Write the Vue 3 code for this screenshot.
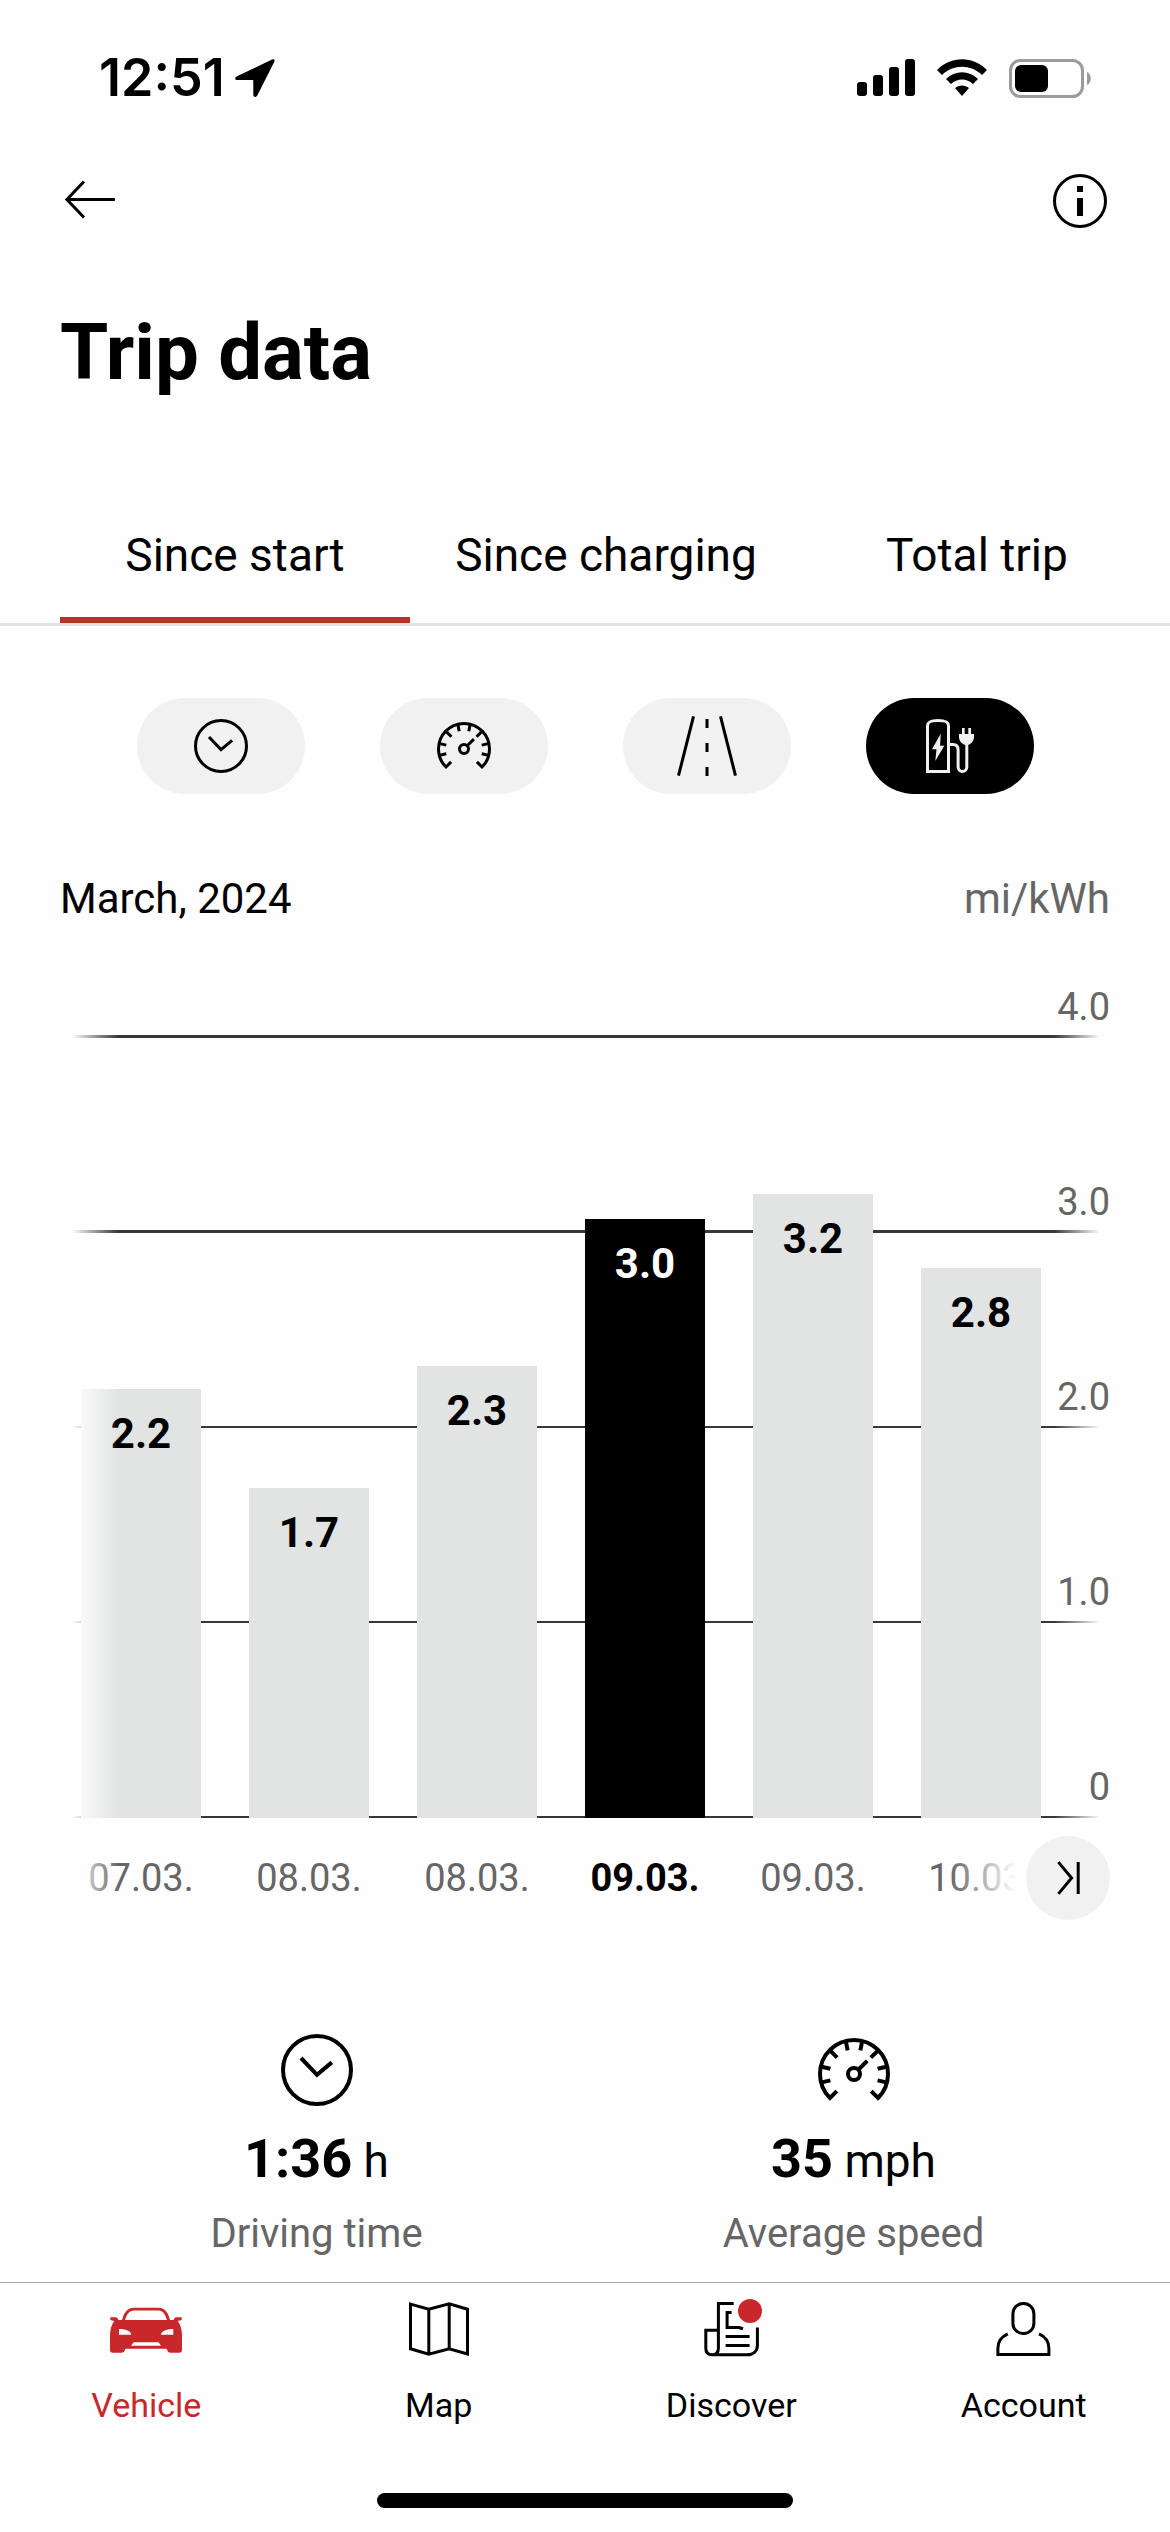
<template>
  <div class="app">
    <!-- shared icon shapes, 24 x 24 grid -->
    <svg class="sprite" aria-hidden="true">
      <symbol id="clock" viewBox="0 0 24 24">
        <circle cx="12" cy="12" r="8.5" />
        <path d="M8 9L12 13.2L15.7 10.1" />
      </symbol>
      <symbol id="gauge" viewBox="0 0 24 24">
        <path d="M7.7 17.3L6 19A8.5 8.5 0 1 1 18 19L16.3 17.3" />
        <path d="M3.9 11.2L6.1 11.7M3.9 15.1L6.1 14.6M6.1 7.2L7.8 8.9M10 5L10.4 7.1M20.1 11.2L17.9 11.7M20.1 15.1L17.9 14.6M17.9 7.2L16.2 8.9M14 5L13.6 7.1" />
        <circle cx="12" cy="13" r="1.5" />
        <path d="M13 12L15.3 9.7" />
      </symbol>
      <symbol id="road" viewBox="0 0 24 24">
        <path d="M7.5 2.1L2.5 21.9M16.5 2.1L21.5 21.9M12 3V6M12 11V14M12 19V22" />
      </symbol>
      <symbol id="charge" viewBox="0 0 24 24">
        <path d="M4.5 20.5V5.3C4.5 4 5.4 3.5 8 3.5S11.5 4 11.5 5.3V20.5Z" />
        <path d="M11.8 11.5H13C14.2 11.5 14.7 12.2 14.7 13.3V19A1.45 1.5 0 0 0 17.6 19V11" />
        <path class="solid" d="M8.9 7.9L6 13.1H7.5L7.1 17L10.1 11.9H8.7ZM16 6H16.9V8H18.1V6H19V8H20V9C20 10.4 19 11.3 18.1 11.6H17C16 11.3 15 10.4 15 9V8H16Z" />
      </symbol>
      <symbol id="car" viewBox="0 0 24 24">
        <path
          class="solid"
          fill-rule="evenodd"
          d="M4 9C4.6 6.6 5.8 4.9 7.8 4.9H16.3C18.3 4.9 19.4 6.6 20 9L21.2 9C21.3 8.4 21.7 8.1 22.2 8.1H23.9V9L22.6 9.3C23.5 10.5 24 12.4 24 14V19C24 19.6 23.7 19.9 23.1 19.9H20.2C19.5 19.9 19.1 19.5 18.9 18.6H5.1C4.9 19.5 4.5 19.9 3.8 19.9H.9C.3 19.9 0 19.6 0 19V14C0 12.4.5 10.5 1.4 9.3L.1 9V8.1H1.8C2.3 8.1 2.7 8.4 2.8 9ZM5 9H19C18.4 7 17.6 5.8 16.2 5.8H7.9C6.5 5.8 5.6 7 5 9ZM3 12V13.9H7.1C7 12.9 5.6 12 3 12ZM21.1 12V13.9H17C17.1 12.9 18.5 12 21.1 12ZM7.9 16.4L7 17.6H17L16.2 16.4Z"
        />
      </symbol>
      <symbol id="map" viewBox="0 0 24 24">
        <path d="M2.5 3.7L8.6 5.4L15.4 3.6L21.5 5.4V20.3L15.4 18.6L8.6 20.4L2.5 18.6ZM8.6 5.4V20.4M15.4 3.6V18.6" />
      </symbol>
      <symbol id="news" viewBox="0 0 24 24">
        <path d="M12.9 3.5H7.8V18.4C7.8 19.8 7 20.6 5.7 20.6S3.6 19.8 3.6 18.4V12.4H7.8M5.7 20.6H17.4C19.5 20.6 20.8 19.3 20.8 17.4V11.5" />
        <path d="M12.2 6.5H10.7V11.5H14.6L16 11.9M10.2 14.5H18.2M10.2 17.5H18.2" />
      </symbol>
      <symbol id="account" viewBox="0 0 24 24">
        <rect x="8.3" y="3.5" width="7" height="10" rx="3.4" />
        <path d="M6.6 13.6C4.6 14.5 3.3 16.2 3.3 18.4V20.5H20.3V18.4C20.3 16.2 19 14.5 17 13.6" />
      </symbol>
    </svg>

    <div class="status">
      <div class="clock">
        <span>12:51</span>
        <svg class="location" viewBox="0 0 40 38">
          <path d="M37 .6L2 17.2C-.7 18.6-.1 21 2.500 21H17.500C18 21 18.300 21.300 18.300 21.800V35.500C18.300 38.400 21.200 38.900 22.400 36.300L39.200 3C40.200.9 39-.3 37 .6Z" />
        </svg>
      </div>
      <div class="system">
        <svg class="signal" viewBox="0 0 58 38">
          <rect x="0" y="23" width="10" height="14" rx="3" />
          <rect x="16" y="16" width="10" height="21" rx="3" />
          <rect x="32" y="8" width="10" height="29" rx="3" />
          <rect x="48" y="0" width="10" height="37" rx="3" />
        </svg>
        <svg class="wifi" viewBox="0 0 50 38">
          <path d="M0 11C14-3.500 36-3.500 50 11L45 16C34 5 16 5 5 16Z" />
          <path d="M9 20C18 11 32 11 41 20L36 25C30 19 20 19 14 25Z" />
          <path d="M18 29C22 25.500 28 25.500 32 29L25 37Z" />
        </svg>
        <svg class="battery" viewBox="0 0 83 39">
          <rect class="shell" x="1.500" y="1.500" width="72" height="36" rx="10" />
          <rect x="6" y="6" width="33" height="27" rx="6" />
          <path class="nub" d="M78 13C83 15 83 24 78 26Z" />
        </svg>
      </div>
    </div>

    <header class="header">
      <button class="icon-button" aria-label="Back">
        <svg class="icon" viewBox="0 0 24 24"><path d="M10 5.500L4.300 11.500L10 17.500M4.300 11.500H20.300" /></svg>
      </button>
      <button class="icon-button" aria-label="Information">
        <svg class="icon" viewBox="0 0 24 24">
          <circle cx="12" cy="12" r="8.500" />
          <path class="solid" d="M11 7H13V9H11ZM11 11H13V17H11Z" />
        </svg>
      </button>
    </header>

    <h1 class="title">Trip data</h1>

    <div class="tabs" role="tablist">
      <button
        v-for="tab in tabs"
        :key="tab"
        class="tab"
        :class="{ active: tab === activeTab }"
        role="tab"
        :aria-selected="tab === activeTab"
        @click="activeTab = tab"
      >
        {{ tab }}
      </button>
    </div>

    <div class="metrics">
      <button
        v-for="metric in metrics"
        :key="metric.icon"
        class="metric"
        :class="{ active: metric.icon === activeMetric }"
        :aria-label="metric.name"
        @click="activeMetric = metric.icon"
      >
        <svg class="icon"><use :href="'#' + metric.icon" /></svg>
      </button>
    </div>

    <section class="chart">
      <div class="chart-head">
        <span>March, 2024</span>
        <span class="muted">mi/kWh</span>
      </div>
      <div class="plot">
        <div class="scale">
          <div v-for="step in steps" :key="step" class="step">{{ step }}</div>
        </div>
        <div class="bars">
          <button
            v-for="(trip, i) in trips"
            :key="i"
            class="bar"
            :class="{ active: i === activeTrip }"
            :style="{ height: (trip.value / 4) * 100 + '%' }"
            @click="activeTrip = i"
          >
            {{ trip.label }}
          </button>
        </div>
      </div>
      <div class="dates">
        <span v-for="(trip, i) in trips" :key="i" class="date" :class="{ active: i === activeTrip }">{{ trip.date }}</span>
        <button class="latest" aria-label="Latest trip" @click="activeTrip = trips.length - 1">
          <svg class="icon" viewBox="0 0 24 24"><path d="M8.800 6.700L13.200 12L8.800 17.300M15.400 6.700V17.300" /></svg>
        </button>
      </div>
    </section>

    <section class="stats">
      <div v-for="stat in stats" :key="stat.name" class="stat">
        <svg class="icon large"><use :href="'#' + stat.icon" /></svg>
        <div class="stat-value"><b>{{ stat.value }}</b> {{ stat.unit }}</div>
        <div class="stat-name muted">{{ stat.name }}</div>
      </div>
    </section>

    <nav class="nav">
      <a v-for="item in navItems" :key="item.name" href="#" class="nav-item" :class="{ active: item.name === 'Vehicle' }">
        <span class="nav-icon">
          <svg class="icon"><use :href="'#' + item.icon" /></svg>
          <i v-if="item.badge" class="badge"></i>
        </span>
        {{ item.name }}
      </a>
    </nav>
    <div class="home-indicator"></div>
  </div>
</template>

<script setup>
import { ref } from "vue";

const tabs = ["Since start", "Since charging", "Total trip"];
const activeTab = ref("Since start");

const metrics = [
  { icon: "clock", name: "Driving time" },
  { icon: "gauge", name: "Average speed" },
  { icon: "road", name: "Distance" },
  { icon: "charge", name: "Consumption" },
];
const activeMetric = ref("charge");

const steps = ["4.0", "3.0", "2.0", "1.0", "0"];
const trips = [
  { date: "07.03.", value: 2.2, label: "2.2" },
  { date: "08.03.", value: 1.69, label: "1.7" },
  { date: "08.03.", value: 2.32, label: "2.3" },
  { date: "09.03.", value: 3.07, label: "3.0" },
  { date: "09.03.", value: 3.2, label: "3.2" },
  { date: "10.03.", value: 2.82, label: "2.8" },
];
const activeTrip = ref(3);

const stats = [
  { icon: "clock", value: "1:36", unit: "h", name: "Driving time" },
  { icon: "gauge", value: "35", unit: "mph", name: "Average speed" },
];

const navItems = [
  { icon: "car", name: "Vehicle" },
  { icon: "map", name: "Map" },
  { icon: "news", name: "Discover", badge: true },
  { icon: "account", name: "Account" },
];
</script>

<style>
body {
  background: #fefefe;
}
</style>

<style scoped>
.app {
  --page: #fefefe;
  --red: #c8282a;
  display: flex;
  flex-direction: column;
  min-height: 100vh;
  background: var(--page);
  color: #000;
  font-family: Roboto, "Liberation Sans", sans-serif;
}

button {
  padding: 0;
  border: none;
  background: none;
  color: inherit;
  font: inherit;
}

.sprite {
  display: none;
}

.icon {
  display: block;
  width: 72px;
  height: 72px;
  fill: none;
  stroke: currentColor;
  stroke-width: 1;
}

.icon.large {
  width: 96px;
  height: 96px;
}

.solid {
  fill: currentColor;
  stroke: none;
}

.muted {
  color: #666;
}

.status {
  display: flex;
  justify-content: space-between;
  align-items: center;
  height: 60px;
  padding: 48px 78px 57px 99px;
}

.clock {
  display: flex;
  align-items: center;
  gap: 10px;
  font: 600 52px/60px Inter, sans-serif;
}

.location {
  width: 40px;
  height: 38px;
}

.system {
  display: flex;
  align-items: center;
  gap: 22px;
}

.signal {
  width: 58px;
  height: 38px;
}

.wifi {
  width: 50px;
  height: 38px;
}

.battery {
  width: 83px;
  height: 39px;
}

.shell {
  fill: none;
  stroke: #9b9b9b;
  stroke-width: 3;
}

.nub {
  fill: #9b9b9b;
}

.header {
  display: flex;
  justify-content: space-between;
  padding: 0 54px;
}

.title {
  margin: 66px 60px 0;
  font-size: 78px;
  line-height: 100px;
  font-weight: 700;
}

.tabs {
  display: grid;
  grid-template-columns: repeat(3, 1fr);
  gap: 21px;
  padding: 122px 18px 0 60px;
  border-bottom: 3px solid #e2e2e2;
}

.tab {
  padding-bottom: 32px;
  border-bottom: 6px solid transparent;
  font-size: 46px;
  line-height: 60px;
  white-space: nowrap;
}

.tab.active {
  border-color: #b53428;
}

.metrics {
  display: flex;
  justify-content: center;
  gap: 75px;
  margin-top: 72px;
}

.metric {
  display: flex;
  justify-content: center;
  align-items: center;
  width: 168px;
  height: 96px;
  border-radius: 48px;
  background: #f1f1f1;
}

.metric.active {
  background: #000;
  color: #f1f1f1;
}

.chart {
  margin: 78px 60px 0;
}

.chart-head {
  display: flex;
  justify-content: space-between;
  font-size: 42px;
  line-height: 54px;
}

.plot {
  position: relative;
  display: grid;
  margin-top: 47px;
}

.scale,
.bars {
  grid-area: 1 / 1;
}

.step {
  position: relative;
  display: flex;
  justify-content: flex-end;
  align-items: flex-end;
  box-sizing: border-box;
  height: 195px;
  padding-bottom: 7px;
  color: #666;
  font-size: 38px;
  line-height: 48px;
}

.step:first-child {
  height: 65px;
}

/* grid line, fading out on the right */
.step::after {
  content: "";
  position: absolute;
  right: 10px;
  bottom: 0;
  left: 0;
  height: 2px;
  background: linear-gradient(to right, #383636 calc(100% - 46px), transparent);
}

.step:nth-child(-n + 2)::after {
  height: 3px;
}

.bars {
  position: relative;
  display: grid;
  grid-template-columns: repeat(6, 1fr);
  align-items: end;
  align-self: end;
  gap: 48px;
  height: 780px;
  padding: 0 69px 0 21px;
}

.bar {
  display: flex;
  justify-content: center;
  align-items: flex-start;
  padding-top: 18px;
  background: #e2e4e3;
  font-size: 42px;
  line-height: 54px;
  font-weight: 700;
}

.bar.active {
  background: #000;
  color: #fff;
}

.plot::after,
.dates::before {
  content: "";
  position: absolute;
  top: 0;
  bottom: 0;
  left: 0;
  width: 58px;
  background: linear-gradient(to right, var(--page) 12px, transparent);
}

.dates {
  position: relative;
  display: grid;
  grid-template-columns: repeat(6, 1fr);
  align-items: center;
  gap: 48px;
  height: 84px;
  margin-top: 18px;
  padding: 0 69px 0 21px;
}

.dates::after {
  content: "";
  position: absolute;
  top: 0;
  right: 0;
  bottom: 0;
  width: 160px;
  background: linear-gradient(to right, transparent, var(--page) 66px);
}

.date {
  color: #666;
  font-size: 38px;
  line-height: 48px;
  text-align: center;
}

.date.active {
  color: #000;
  font-weight: 700;
}

.latest {
  position: absolute;
  z-index: 1;
  top: 0;
  right: 0;
  display: flex;
  justify-content: center;
  align-items: center;
  width: 84px;
  height: 84px;
  border-radius: 50%;
  background: #f1f1f1;
}

.stats {
  display: grid;
  grid-template-columns: 1fr 1fr;
  margin: 102px 48px 16px;
}

.stat {
  display: flex;
  flex-direction: column;
  align-items: center;
}

.stat-value {
  margin-top: 11px;
  font-size: 46px;
  line-height: 64px;
}

.stat-value b {
  font-size: 54px;
  line-height: 54px;
}

.stat-name {
  margin-top: 14px;
  font-size: 40px;
  line-height: 54px;
}

.nav {
  display: grid;
  grid-template-columns: repeat(4, 1fr);
  margin-top: auto;
  padding-top: 10px;
  border-top: 1px solid #aaa;
}

.nav-item {
  display: flex;
  flex-direction: column;
  align-items: center;
  gap: 17px;
  color: #000;
  font-size: 34px;
  line-height: 46px;
  text-decoration: none;
}

.nav-item.active {
  color: var(--red);
}

.nav-icon {
  position: relative;
}

.badge {
  position: absolute;
  top: 6px;
  right: 5px;
  width: 24px;
  height: 24px;
  border-radius: 50%;
  background: var(--red);
}

.home-indicator {
  align-self: center;
  width: 416px;
  height: 15px;
  margin: 65px 0 24px;
  border-radius: 8px;
  background: #000;
}
</style>
